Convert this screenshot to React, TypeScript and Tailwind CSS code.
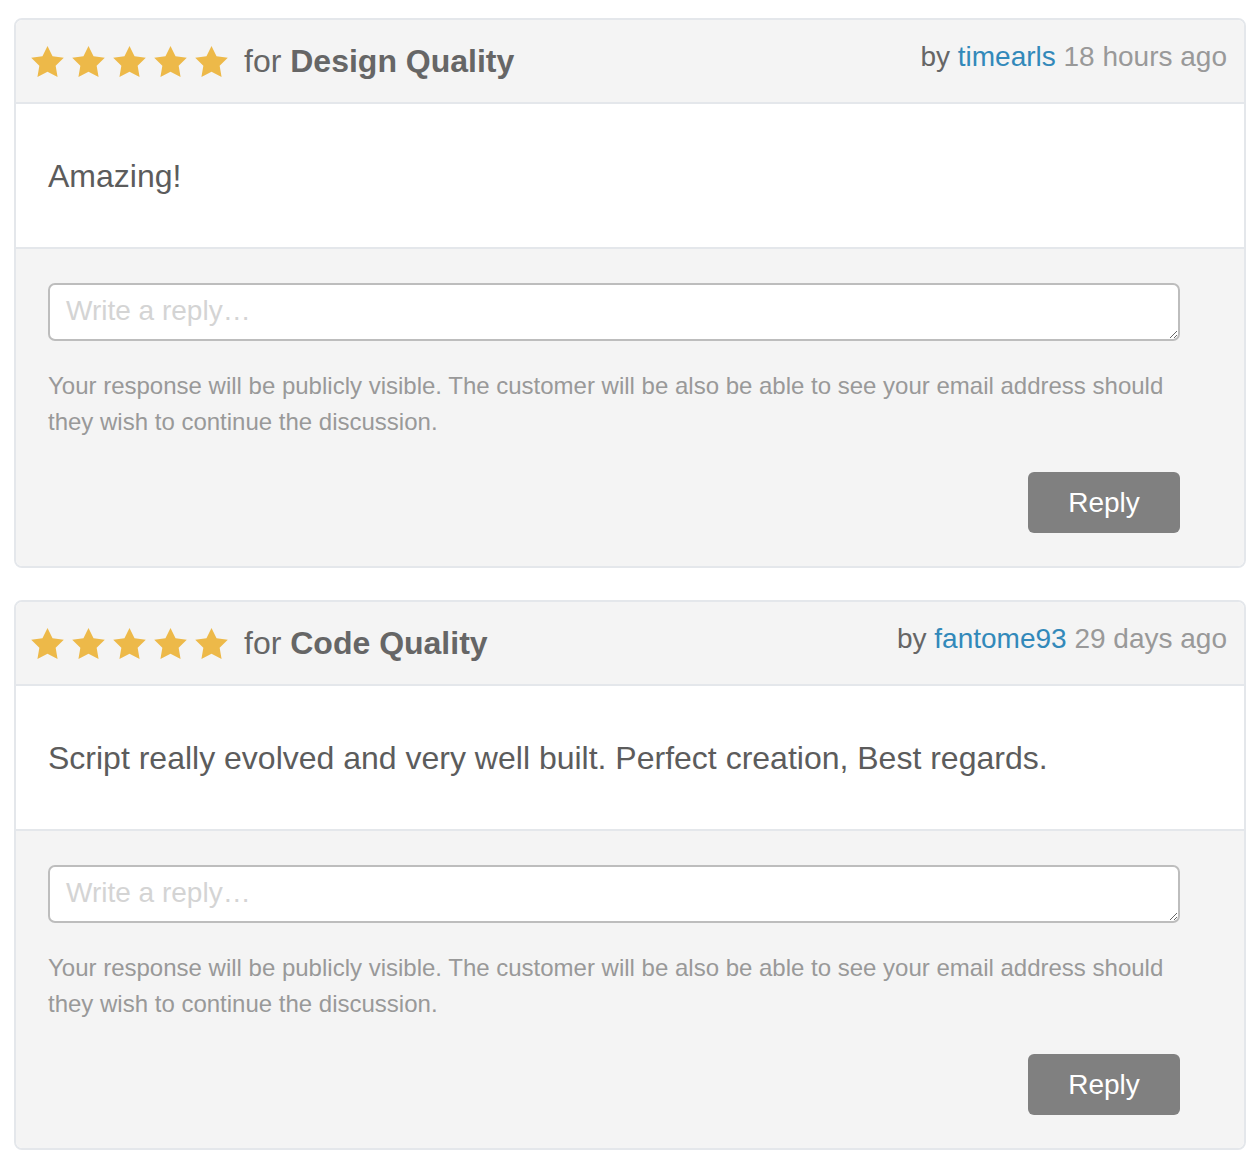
import React from "react";

interface Review {
  category: string;
  author: string;
  when: string;
  body: string;
}

const reviews: Review[] = [
  {
    category: "Design Quality",
    author: "timearls",
    when: "18 hours ago",
    body: "Amazing!",
  },
  {
    category: "Code Quality",
    author: "fantome93",
    when: "29 days ago",
    body: "Script really evolved and very well built. Perfect creation, Best regards.",
  },
];

const Star = () => (
  <svg width="33" height="31" viewBox="2 2 20 19.02" className="shrink-0">
    <polygon
      points="12,2 15.09,8.26 22,9.27 17,14.14 18.18,21.02 12,17.77 5.82,21.02 7,14.14 2,9.27 8.91,8.26"
      fill="#edb949"
    />
  </svg>
);

const ReviewCard: React.FC<Review> = ({ category, author, when, body }) => (
  <div className="border-2 border-[#e4e7eb] rounded-[8px] overflow-hidden">
    <div className="h-[84px] bg-[#f4f4f4] border-b-2 border-[#e4e7eb] pl-[15px] pr-[17px] flex items-start justify-between">
      <div className="flex items-center h-[82px]">
        <div className="flex gap-[8px]">
          <Star />
          <Star />
          <Star />
          <Star />
          <Star />
        </div>
        <span className="ml-[16px] text-[32px] leading-[32px] text-[#666]">
          for <b className="font-bold">{category}</b>
        </span>
      </div>
      <div className="mt-[23px] text-[28px] leading-[28px]">
        <span className="text-[#666]">by </span>
        <a href="#" className="text-[#3289ba]">
          {author}
        </a>
        <span className="text-[#999]"> {when}</span>
      </div>
    </div>
    <div className="bg-white border-b-2 border-[#e4e7eb] h-[145px] px-[32px] flex items-center">
      <p className="text-[32px] leading-[32px] text-[#5c5c5c]">{body}</p>
    </div>
    <div className="bg-[#f4f4f4] pl-[32px] pr-[64px] pt-[34px] pb-[33px] flex flex-col">
      <textarea
        placeholder="Write a reply…"
        className="block w-full h-[58px] bg-white border-2 border-[#bdbdbd] rounded-[7px] px-[16px] py-[9px] text-[28px] leading-[34px] text-[#555] placeholder:text-[#d4d4d4] outline-none"
      />
      <p className="mt-[27px] text-[24px] leading-[36px] text-[#999]">
        Your response will be publicly visible. The customer will be also be
        able to see your email address should they wish to continue the
        discussion.
      </p>
      <div className="mt-[32px] flex justify-end">
        <button className="w-[152px] h-[61px] bg-[#808080] rounded-[6px] text-white text-[28px]">
          Reply
        </button>
      </div>
    </div>
  </div>
);

export default function App() {
  return (
    <div
      className="min-h-[1176px] bg-white px-[14px] pt-[18px] flex flex-col gap-[32px]"
      style={{ fontFamily: '"Liberation Sans", Arial, sans-serif' }}
    >
      {reviews.map((r) => (
        <ReviewCard key={r.author} {...r} />
      ))}
    </div>
  );
}
